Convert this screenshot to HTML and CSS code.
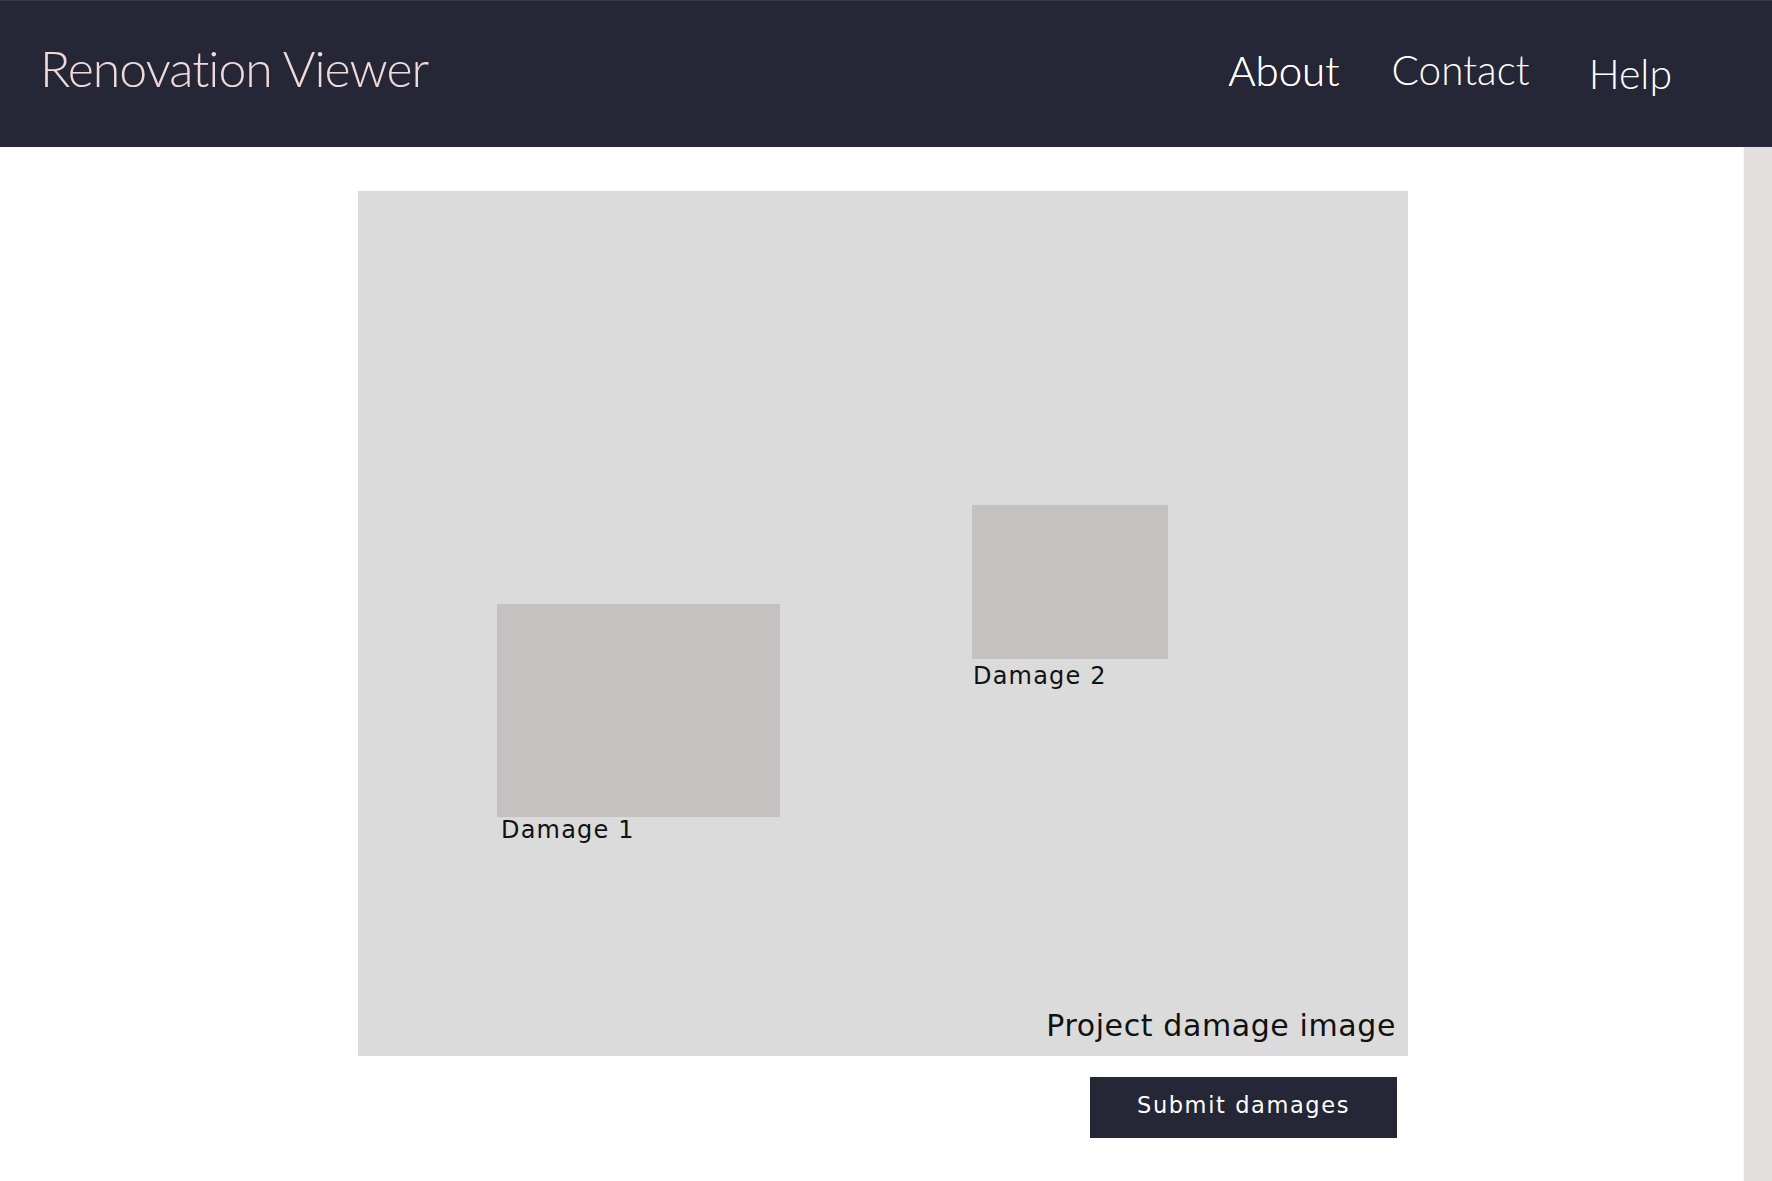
FILE: index.html
```html
<!DOCTYPE html>
<html lang="en">
<head>
<meta charset="utf-8">
<title>Renovation Viewer</title>
<link rel="stylesheet" href="styles.css">
</head>
<body>
  <header class="topbar">
    <h1 class="brand">Renovation Viewer</h1>
    <nav class="nav">
      <a class="nav-link nav-about" href="#">About</a>
      <a class="nav-link nav-contact" href="#">Contact</a>
      <a class="nav-link nav-help" href="#">Help</a>
    </nav>
  </header>
  <div class="page">
    <main class="content">
      <section class="viewer">
        <div class="damage damage-1">
          <div class="damage-box"></div>
          <span class="damage-label">Damage 1</span>
        </div>
        <div class="damage damage-2">
          <div class="damage-box"></div>
          <span class="damage-label">Damage 2</span>
        </div>
        <p class="viewer-caption">Project damage image</p>
      </section>
      <div class="actions">
        <button class="submit" type="button">Submit damages</button>
      </div>
    </main>
    <aside class="side-rail"></aside>
  </div>
</body>
</html>
```

FILE: styles.css
```css
html, body {
  margin: 0;
  padding: 0;
}

body {
  width: 1772px;
  height: 1181px;
  overflow: hidden;
  background: #ffffff;
  font-family: "DejaVu Sans", "Lato", sans-serif;
  color: #111111;
}

.topbar {
  height: 147px;
  box-sizing: border-box;
  background: #252736;
  border-top: 1px solid #34364a;
  display: flex;
  align-items: flex-start;
  justify-content: space-between;
  padding: 0 100px 0 40px;
}

.brand {
  margin: 37px 0 0 0;
  font-family: "Lato", sans-serif;
  font-weight: 300;
  font-size: 50px;
  line-height: 1.2;
  letter-spacing: -1px;
  color: #f0d9d9;
  white-space: nowrap;
}

.nav {
  display: flex;
  align-items: flex-start;
  margin-top: 45px;
}

.nav-link {
  font-family: "Lato", sans-serif;
  font-weight: 300;
  font-size: 40.5px;
  line-height: 1.2;
  color: #ffffff;
  text-decoration: none;
}

.nav-about {
  font-size: 42px;
  margin-top: -1px;
  text-shadow: 0 0 0.4px #ffffff;
}

.nav-contact {
  margin-left: 52px;
}

.nav-help {
  margin-left: 59px;
  margin-top: 3px;
  font-size: 41px;
}

.page {
  display: grid;
  grid-template-columns: 1fr 29px;
  height: 1034px;
}

.content {
  padding: 44px 0 0 358px;
}

.viewer {
  position: relative;
  width: 1050px;
  height: 865px;
  box-sizing: border-box;
  background: #dbdbdb;
  display: flex;
  flex-direction: column;
  justify-content: flex-end;
  align-items: flex-end;
  padding: 0 12px 12px 0;
}

.damage {
  position: absolute;
  display: flex;
  flex-direction: column;
}

.damage-box {
  background: #c4c1c0;
}

.damage-label {
  font-size: 24px;
  line-height: 1.164;
  letter-spacing: 1.2px;
  color: #111111;
  white-space: nowrap;
}

.damage-1 {
  left: 139px;
  top: 413px;
}

.damage-1 .damage-box {
  width: 283px;
  height: 213px;
}

.damage-1 .damage-label {
  margin: 0 0 0 4px;
}

.damage-2 {
  left: 614px;
  top: 314px;
}

.damage-2 .damage-box {
  width: 196px;
  height: 154px;
}

.damage-2 .damage-label {
  margin: 4px 0 0 1px;
}

.viewer-caption {
  margin: 0;
  font-size: 30px;
  line-height: 1.164;
  letter-spacing: 0.6px;
  color: #111111;
  white-space: nowrap;
}

.actions {
  width: 1050px;
  display: flex;
  justify-content: flex-end;
  padding: 21px 11px 0 0;
  box-sizing: border-box;
}

.submit {
  width: 307px;
  height: 61px;
  border: none;
  border-radius: 0;
  background: #252736;
  color: #ffffff;
  font-family: "DejaVu Sans", "Lato", sans-serif;
  font-size: 22.5px;
  letter-spacing: 1.6px;
  padding: 0 0 6px 0;
  display: flex;
  align-items: center;
  justify-content: center;
}

.side-rail {
  background: #e3dfdf;
  border-left: 1px solid #f6f6f6;
}
```
